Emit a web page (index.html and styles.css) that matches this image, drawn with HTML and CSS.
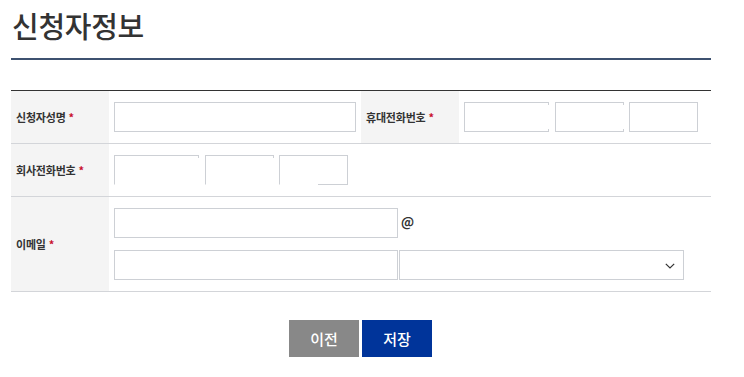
FILE: index.html
```html
<!DOCTYPE html>
<html lang="ko">
<head>
  <meta charset="UTF-8">
  <meta name="viewport" content="width=device-width, initial-scale=1.0">
  <title>신청자정보</title>
  <link rel="stylesheet" href="styles.css">
</head>
<body>
  <div class="wrap">
    <h2 class="title">신청자정보</h2>

    <table class="form-table">
      <colgroup>
        <col class="col-th">
        <col class="col-td">
        <col class="col-th">
        <col class="col-td">
      </colgroup>
      <tr>
        <th>신청자성명 <span class="req">*</span></th>
        <td>
          <div class="field">
            <input type="text" class="input name">
          </div>
        </td>
        <th>휴대전화번호 <span class="req">*</span></th>
        <td>
          <div class="field">
            <input type="text" class="input tel1">
            <span class="sep"></span>
            <input type="text" class="input tel2">
            <span class="sep sep-sm"></span>
            <input type="text" class="input tel2">
          </div>
        </td>
      </tr>
      <tr>
        <th>회사전화번호 <span class="req">*</span></th>
        <td colspan="3">
          <div class="field cut">
            <input type="text" class="input tel1">
            <span class="sep"></span>
            <input type="text" class="input tel2">
            <span class="sep sep-sm"></span>
            <input type="text" class="input tel2 tel-end">
          </div>
        </td>
      </tr>
      <tr>
        <th>이메일 <span class="req">*</span></th>
        <td colspan="3">
          <div class="field">
            <input type="text" class="input email">
            <span class="at">@</span>
          </div>
          <div class="field field-gap">
            <input type="text" class="input email">
            <div class="select-wrap">
              <select class="select"></select>
              <svg class="chevron" width="10" height="6" viewBox="0 0 10 6">
                <polyline points="0.8,0.8 5,5 9.2,0.8" fill="none" stroke="#333" stroke-width="1.2"/>
              </svg>
            </div>
          </div>
        </td>
      </tr>
    </table>

    <div class="btns">
      <button type="button" class="btn btn-prev">이전</button>
      <button type="button" class="btn btn-save">저장</button>
    </div>
  </div>
</body>
</html>
```

FILE: styles.css
```css
body {
  margin: 0;
  font-family: "Noto Sans CJK KR", "Noto Sans", sans-serif;
  color: #333;
  background: #fff;
}
.wrap {
  width: 700px;
  margin-left: 11px;
  padding-top: 5px;
}
.title {
  margin: 0;
  padding-bottom: 13px;
  padding-left: 1px;
  font-size: 29px;
  line-height: 40px;
  font-weight: 500;
  letter-spacing: -0.3px;
  border-bottom: 2px solid #3d5170;
}
.form-table {
  width: 700px;
  margin-top: 30px;
  border-collapse: collapse;
  table-layout: fixed;
  border-top: 1px solid #333;
}
.col-th {
  width: 98px;
}
.col-td {
  width: 252px;
}
.form-table tr {
  border-bottom: 1px solid #d3d5d9;
}
.form-table th {
  background: #f4f4f4;
  padding: 0 5px;
  text-align: left;
  font-size: 11px;
  font-weight: 700;
  letter-spacing: -0.2px;
  white-space: nowrap;
}
.req {
  color: #c8102e;
}
.form-table td {
  padding: 11px 5px;
}
.field {
  display: flex;
  align-items: center;
}
.field-gap {
  margin-top: 12px;
}
.input {
  box-sizing: border-box;
  height: 30px;
  margin: 0;
  padding: 0 5px;
  border: 1px solid #cdd0d5;
  background: #fff;
  font-family: inherit;
  font-size: 12px;
  outline: none;
}
.name {
  width: 242px;
}
.tel1 {
  width: 85px;
}
.tel2 {
  width: 69px;
}
.sep {
  width: 7px;
  height: 24px;
  margin-left: -1px;
  background: #fff;
}
.sep-sm {
  width: 6px;
}
.cut .input {
  border-bottom-color: transparent;
}
.cut .sep {
  align-self: flex-end;
  height: 27px;
}
.cut .tel-end {
  background: linear-gradient(#cdd0d5, #cdd0d5) no-repeat right bottom / 30px 1px;
  background-origin: border-box;
  background-color: #fff;
}
.email {
  width: 284px;
}
.at {
  margin-left: 3px;
  margin-top: -3px;
  font-size: 13px;
  font-weight: 700;
}
.select-wrap {
  position: relative;
  margin-left: 1px;
}
.select {
  display: block;
  box-sizing: border-box;
  width: 285px;
  height: 30px;
  margin: 0;
  border: 1px solid #cdd0d5;
  background: #fff;
  appearance: none;
  outline: none;
}
.chevron {
  position: absolute;
  right: 9px;
  top: 13px;
}
.btns {
  display: flex;
  justify-content: center;
  gap: 3px;
  margin-top: 28px;
  margin-left: -1px;
}
.btn {
  width: 70px;
  height: 37px;
  border: none;
  padding: 0;
  color: #fff;
  font-family: inherit;
  font-size: 15px;
  font-weight: 500;
  cursor: pointer;
}
.btn-prev {
  background: #888;
}
.btn-save {
  background: #00349a;
}
```
